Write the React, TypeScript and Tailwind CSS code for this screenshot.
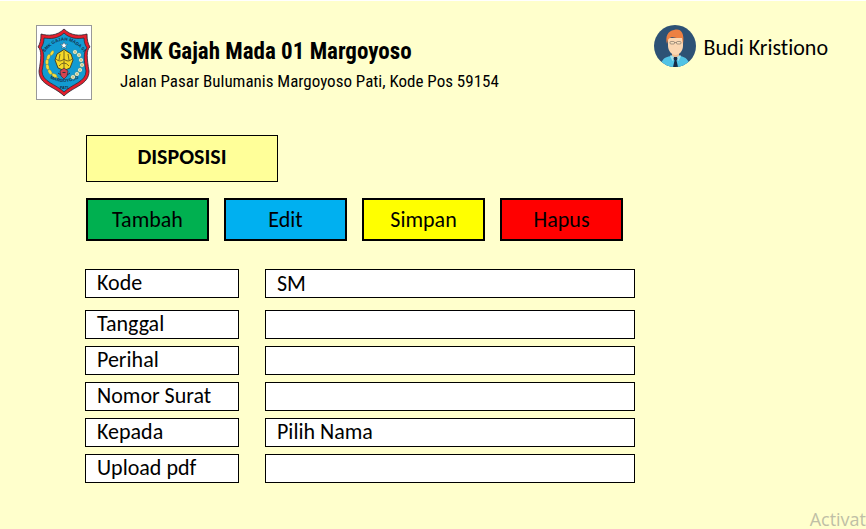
import type { ReactNode } from "react";

const actions = [
  { name: "Tambah", color: "bg-[#00b050]" },
  { name: "Edit", color: "bg-[#00b0f0]" },
  { name: "Simpan", color: "bg-[#ffff00]" },
  { name: "Hapus", color: "bg-[#ff0000]" },
];

const fieldBox =
  "block h-[29px] w-full min-w-0 appearance-none rounded-none border border-black bg-white px-[11px] pb-px text-[22px] leading-[26px] outline-none";

function Field({ id, label, children }: { id: string; label: string; children: ReactNode }) {
  return (
    <div className="flex gap-[26px]">
      <label
        htmlFor={id}
        className="h-[29px] w-[154px] shrink-0 border border-black bg-white px-[11px] text-[22px] leading-[26px] whitespace-nowrap"
      >
        {label}
      </label>
      <div className="min-w-0 flex-1">{children}</div>
    </div>
  );
}

function Crest() {
  const beads = [
    [39, 27], [43, 30], [45, 35], [46, 40], [44, 45], [41, 49], [37, 52],
  ];
  return (
    <svg viewBox="0 0 56 75" className="h-[75px] w-14 shrink-0" role="img" aria-label="Logo SMK Gajah Mada 01">
      <rect x=".5" y=".5" width="55" height="74" fill="#fff" stroke="#999" />
      <path d="M28 4C21 11 12 11 5 9C5 15 4 19 2 22C6 25 5 34 3 46C3 60 18 61 28 71C38 61 53 60 53 46C51 34 50 25 54 22C52 19 51 15 51 9C44 11 35 11 28 4Z" fill="#e21f2d" stroke="#26262e" strokeWidth=".8" />
      <path d="M28 8C22 14 14 14 8 13C8 17 7 20 5 23C9 27 8 36 6 46C6 57 20 59 28 67C36 59 50 57 50 46C48 36 47 27 51 23C49 20 48 17 48 13C42 14 34 14 28 8Z" fill="#129bd2" stroke="#26262e" strokeWidth=".7" />
      <defs>
        <path id="crest-top" d="M9 27Q28 4 48 27" />
        <path id="crest-low" d="M9 50Q28 64 48 50" />
      </defs>
      <g fill="#152f4c" fontFamily="Liberation Sans, sans-serif" fontWeight="700">
        <text fontSize="4.500"><textPath href="#crest-top" startOffset="50%" textAnchor="middle">SMK GAJAH MADA 01</textPath></text>
        <text fontSize="4.500"><textPath href="#crest-low" startOffset="50%" textAnchor="middle">MARGOYOSO</textPath></text>
        <text x="28" y="63.5" fontSize="4" textAnchor="middle">PATI</text>
      </g>
      <path d="m28 17 1 2.300 2.500.1-2 1.600.8 2.500-2.300-1.400-2.300 1.400.8-2.500-2-1.600 2.500-.1Z" fill="#fff" stroke="#24384a" strokeWidth=".4" />
      <path d="M17 27C9 34 9 45 22 53" fill="none" stroke="#b6a31d" strokeWidth="1" />
      <g fill="#f5dd3e" stroke="#777524" strokeWidth=".3">
        <ellipse cx="16" cy="28" rx="1.5" ry="2.6" transform="rotate(35 16 28)" />
        <ellipse cx="12.5" cy="32" rx="1.6" ry="2.8" transform="rotate(20 12.5 32)" />
        <ellipse cx="11" cy="37" rx="1.6" ry="2.8" />
        <ellipse cx="11.5" cy="42" rx="1.6" ry="2.8" transform="rotate(-12 11.5 42)" />
        <ellipse cx="14" cy="47" rx="1.6" ry="2.8" transform="rotate(-35 14 47)" />
        <ellipse cx="18.5" cy="50.5" rx="1.6" ry="2.8" transform="rotate(-60 18.5 50.5)" />
      </g>
      <path d="M39 27C49 36 47 47 34 53" fill="none" stroke="#5a9e55" strokeWidth="1" />
      {beads.map(([x, y]) => (
        <g key={y} fill="#fff" stroke="#8c9448" strokeWidth=".4">
          <circle cx={x} cy={y} r="2.100" />
          <circle cx={x} cy={y} r=".7" fill="#f2cf36" />
        </g>
      ))}
      <path d="M28 24.500 35 29 37 35 34 43 28 45.500 22 43 19 35 21 29Z" fill="#f5d928" stroke="#42371c" strokeWidth=".9" />
      <path d="M20 34Q24 38 28 34Q32 38 36 34M28 26V44M24 29 23 35M32 29 33 35M23 41Q28 35 33 41" fill="none" stroke="#574b20" strokeWidth=".8" />
      <path d="M24 46 28 43 32 46 31 51 28 54 25 51Z" fill="#d5434f" stroke="#342f42" strokeWidth=".7" />
      <path d="M22 48l3 2M34 48l-3 2M26.500 47.500h3" fill="none" stroke="#342f42" strokeWidth="1" />
    </svg>
  );
}

function Avatar() {
  return (
    <svg viewBox="0 0 42 42" className="size-[42px] shrink-0" aria-hidden="true">
      <clipPath id="avatar-circle"><circle cx="21" cy="21" r="21" /></clipPath>
      <g clipPath="url(#avatar-circle)">
        <path d="M0 0h42v42H0z" fill="#2d5275" />
        <path d="M7 42C7 35 10 32 17 31L21 33L26 31C32 32 35 35 36 42Z" fill="#51c3e5" />
        <path d="M18 24h7v7l-3.500 3-3.500-3Z" fill="#efbd91" />
        <path d="M14 13h15v8c0 5-4 9-7.500 9S14 26 14 21Z" fill="#fbd7b2" />
        <path d="M13 19C11 11 14 6 20 5C26 3 31 7 29 19L28 13C24 13 21 13 18 12C16 13 15 13 14 15Z" fill="#ed8042" />
        <g fill="#f8dfbd" stroke="#72665c" strokeWidth=".6">
          <rect x="16" y="16.500" width="4.500" height="2.500" rx="1" />
          <rect x="22.500" y="16.500" width="4.500" height="2.500" rx="1" />
          <path d="M20.500 17.500h2" />
        </g>
        <path d="m17 30 4.500 3-3 3-2.500-5ZM26 30l-4.500 3 3 3 2.500-5Z" fill="#a4e1ee" />
        <path d="m20 32 3 0 .5 2-1 1.500 1.500 6.500h-5l1.500-6.500-1-1.500Z" fill="#172c46" />
      </g>
    </svg>
  );
}

export default function App() {
  return (
    <main className="relative min-h-screen overflow-hidden border-t border-white bg-[#ffffcc] font-['Carlito','Lato',sans-serif] text-black [font-variant-ligatures:none]">
      <header className="flex items-start justify-between pt-6 pr-[38px] pl-9">
        <div className="flex gap-7">
          <Crest />
          <div className="pt-3 font-['Agency_FB','Liberation_Sans_Narrow','Roboto_Condensed','DejaVu_Sans_Condensed',sans-serif] whitespace-nowrap">
            <h1 className="text-[23px] leading-[30px] font-bold">SMK Gajah Mada 01 Margoyoso</h1>
            <p className="text-[17px] leading-7">Jalan Pasar Bulumanis Margoyoso Pati, Kode Pos 59154</p>
          </div>
        </div>
        <div className="flex items-center gap-2">
          <Avatar />
          <span className="pt-1 text-[22px] leading-6 whitespace-nowrap">Budi Kristiono</span>
        </div>
      </header>

      <section className="mt-[35px] px-[86px]">
        <h2 className="flex h-[47px] w-[192px] items-center justify-center border border-black bg-[#ffff99] pb-1 text-[22px] font-bold">
          DISPOSISI
        </h2>
        <div className="mt-4 flex gap-[15px]">
          {actions.map((action) => (
            <button
              key={action.name}
              type="button"
              className={`h-[43px] w-[123px] border-2 border-black text-[22px] ${action.color}`}
            >
              {action.name}
            </button>
          ))}
        </div>
      </section>

      <form className="mt-7 flex max-w-[635px] flex-col gap-3 pl-[85px]">
        <Field id="kode" label="Kode">
          <input id="kode" type="text" defaultValue="SM" className={fieldBox} />
        </Field>
        <div className="flex flex-col gap-[7px]">
          <Field id="tanggal" label="Tanggal">
            <input id="tanggal" type="text" className={fieldBox} />
          </Field>
          <Field id="perihal" label="Perihal">
            <input id="perihal" type="text" className={fieldBox} />
          </Field>
          <Field id="nomor" label="Nomor Surat">
            <input id="nomor" type="text" className={fieldBox} />
          </Field>
          <Field id="kepada" label="Kepada">
            <select id="kepada" className={fieldBox}>
              <option>Pilih Nama</option>
            </select>
          </Field>
          <Field id="upload" label="Upload pdf">
            <input id="upload" type="file" accept="application/pdf" className={`${fieldBox} text-transparent file:hidden`} />
          </Field>
        </div>
      </form>

      <p className="absolute right-0 bottom-0 font-['Open_Sans',sans-serif] text-[18px] leading-5 text-[#bfbfa6]">Activat</p>
    </main>
  );
}
